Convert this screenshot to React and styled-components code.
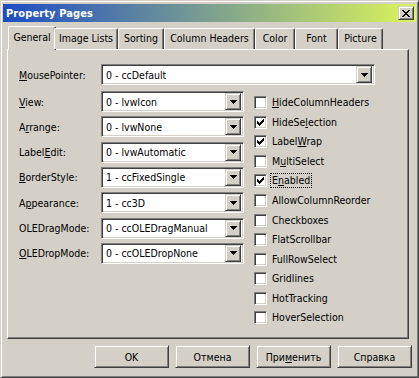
import React from 'react'
import styled, { createGlobalStyle } from 'styled-components'

const face = '#d4d0c8'
const shadow = '#808080'
const dark = '#404040'

const GlobalStyle = createGlobalStyle`
    html, body {
        margin: 0;
        padding: 0;
        background: ${face};
    }
    body {
        font-family: "DejaVu Sans Condensed", "DejaVu Sans", sans-serif;
        font-stretch: condensed;
        font-size: 10.5px;
        color: #000;
    }
`

const Window = styled.div`
    box-sizing: border-box;
    width: 419px;
    height: 378px;
    padding: 2px 1px 1px;
    background: ${face};
    border: 1px solid;
    border-color: ${face} ${dark} ${dark} ${face};
    box-shadow: inset 1px 1px #fff, inset -1px -1px ${shadow};
    display: flex;
    flex-direction: column;
`

const TitleBar = styled.div`
    height: 18px;
    margin: 1px 1px 0;
    display: flex;
    align-items: center;
    justify-content: space-between;
    padding: 0 2px 0 3px;
    background: linear-gradient(to right, #1c4cc6, #dcf45a);
    color: #fff;
    font-weight: bold;
    font-size: 11px;
    letter-spacing: 0.1px;
`

const CloseButton = styled.div`
    box-sizing: border-box;
    width: 16px;
    height: 14px;
    background: ${face};
    border: 1px solid;
    border-color: ${face} ${dark} ${dark} ${face};
    box-shadow: inset 1px 1px #fff, inset -1px -1px ${shadow};
    display: flex;
    align-items: center;
    justify-content: center;
`

const Body = styled.div`
    flex: 1;
    display: flex;
    flex-direction: column;
    padding: 4px 5px 0;
`

const TabStrip = styled.div`
    height: 23px;
    display: flex;
    align-items: flex-end;
    padding-left: 3px;
    position: relative;
    z-index: 1;
`

const Tab = styled.div`
    box-sizing: border-box;
    width: ${p => p.$w}px;
    height: ${p => (p.$active ? 24 : 21)}px;
    margin: ${p => (p.$active ? '0 -2px -1px' : '0')};
    padding-top: ${p => (p.$active ? 4 : 3)}px;
    text-align: center;
    background: ${face};
    border-top: 1px solid #fff;
    border-left: 1px solid #fff;
    border-right: 1px solid ${dark};
    border-top-left-radius: 2px;
    border-top-right-radius: 2px;
    box-shadow: inset -1px 0 ${shadow};
    white-space: nowrap;
`

const Panel = styled.div`
    box-sizing: border-box;
    width: 402px;
    height: 290px;
    border: 1px solid;
    border-color: #fff ${dark} ${dark} #fff;
    box-shadow: inset -1px -1px ${shadow};
    padding: 14px 0 0 11px;
    display: flex;
    flex-direction: column;
    gap: 6px;
`

const FieldRow = styled.div`
    display: flex;
    align-items: center;
    height: 21px;
`

const Label = styled.span`
    width: 82px;
    flex: none;
    white-space: nowrap;
`

const Key = styled.u`
    text-underline-offset: 1px;
`

const Combo = styled.div`
    box-sizing: border-box;
    width: ${p => p.$w}px;
    height: 21px;
    background: #fff;
    border: 1px solid;
    border-color: ${shadow} #fff #fff ${shadow};
    box-shadow: inset 1px 1px ${dark}, inset -1px -1px ${face};
    display: flex;
    align-items: center;
    justify-content: space-between;
    padding: 2px 2px 2px 4px;
    white-space: nowrap;
`

const DropButton = styled.div`
    box-sizing: border-box;
    width: 16px;
    height: 17px;
    background: ${face};
    border: 1px solid;
    border-color: ${face} ${dark} ${dark} ${face};
    box-shadow: inset 1px 1px #fff, inset -1px -1px ${shadow};
    display: flex;
    align-items: center;
    justify-content: center;
`

const Columns = styled.div`
    display: flex;
    gap: 10px;
`

const FieldList = styled.div`
    display: grid;
    grid-auto-rows: 21px;
    row-gap: 4.33px;
`

const CheckList = styled.div`
    display: grid;
    grid-auto-rows: 19.55px;
    padding-top: 2px;
`

const CheckRow = styled.div`
    display: flex;
    align-items: center;
    gap: 5px;
    white-space: nowrap;
`

const Box = styled.div`
    box-sizing: border-box;
    width: 13px;
    height: 13px;
    flex: none;
    background: #fff;
    border: 1px solid;
    border-color: ${shadow} #fff #fff ${shadow};
    box-shadow: inset 1px 1px ${dark}, inset -1px -1px ${face};
    display: flex;
    align-items: center;
    justify-content: center;
`

const CheckText = styled.span`
    padding: 0 1px;
    border: 1px ${p => (p.$focus ? 'dotted #000' : 'solid transparent')};
    margin-left: -2px;
    line-height: 13px;
`

const ButtonRow = styled.div`
    display: flex;
    justify-content: flex-end;
    gap: 6px;
    margin-top: 6px;
`

const PushButton = styled.div`
    box-sizing: border-box;
    width: 75px;
    height: 23px;
    border: 1px solid;
    border-color: ${face} ${dark} ${dark} ${face};
    box-shadow: inset 1px 1px #fff, inset -1px -1px ${shadow};
    display: flex;
    align-items: center;
    justify-content: center;
`

const Arrow = () => (
    <svg width="7" height="4" viewBox="0 0 7 4" shapeRendering="crispEdges">
        <path d="M0 0h7v1H0zM1 1h5v1H1zM2 2h3v1H2zM3 3h1v1H3z" fill="#000" />
    </svg>
)

const CheckMark = () => (
    <svg width="7" height="7" viewBox="0 0 7 7" shapeRendering="crispEdges">
        <path d="M6 0h1v3H6zM5 1h1v3H5zM4 2h1v3H4zM3 3h1v3H3zM2 4h1v3H2zM1 3h1v3H1zM0 2h1v3H0z" fill="#000" />
    </svg>
)

const CloseGlyph = () => (
    <svg width="8" height="7" viewBox="0 0 8 7" shapeRendering="crispEdges">
        <path d="M0 0h2v1H0zM6 0h2v1H6zM1 1h2v1H1zM5 1h2v1H5zM2 2h4v1H2zM3 3h2v1H3zM2 4h4v1H2zM1 5h2v1H1zM5 5h2v1H5zM0 6h2v1H0zM6 6h2v1H6z" fill="#000" />
    </svg>
)

const tabs = [
    { name: 'General', w: 48, active: true },
    { name: 'Image Lists', w: 64 },
    { name: 'Sorting', w: 46 },
    { name: 'Column Headers', w: 91 },
    { name: 'Color', w: 40 },
    { name: 'Font', w: 43 },
    { name: 'Picture', w: 45 },
]

const fields = [
    { pre: '', key: 'V', post: 'iew:', value: '0 - lvwIcon' },
    { pre: 'A', key: 'r', post: 'range:', value: '0 - lvwNone' },
    { pre: 'Label', key: 'E', post: 'dit:', value: '0 - lvwAutomatic' },
    { pre: '', key: 'B', post: 'orderStyle:', value: '1 - ccFixedSingle' },
    { pre: 'A', key: 'p', post: 'pearance:', value: '1 - cc3D' },
    { pre: 'OLEDragMode:', key: '', post: '', value: '0 - ccOLEDragManual' },
    { pre: '', key: 'O', post: 'LEDropMode:', value: '0 - ccOLEDropNone' },
]

const checks = [
    { pre: '', key: 'H', post: 'ideColumnHeaders' },
    { pre: 'HideSe', key: 'l', post: 'ection', on: true },
    { pre: 'Label', key: 'W', post: 'rap', on: true },
    { pre: 'M', key: 'u', post: 'ltiSelect' },
    { pre: 'E', key: 'n', post: 'abled', on: true, focus: true },
    { pre: 'AllowColumnReorder' },
    { pre: 'Checkboxes' },
    { pre: 'FlatScrollbar' },
    { pre: 'FullRowSelect' },
    { pre: 'Gridlines' },
    { pre: 'HotTracking' },
    { pre: 'HoverSelection' },
]

const Text = ({ pre, k, post }) => (
    <>
        {pre}
        {k && <Key>{k}</Key>}
        {post}
    </>
)

const App = () => {
    return (
        <>
            <GlobalStyle />
            <Window>
                <TitleBar>
                    <span>Property Pages</span>
                    <CloseButton><CloseGlyph /></CloseButton>
                </TitleBar>
                <Body>
                    <TabStrip>
                        {tabs.map(t => (
                            <Tab key={t.name} $w={t.w} $active={t.active}>{t.name}</Tab>
                        ))}
                    </TabStrip>
                    <Panel>
                        <FieldRow>
                            <Label><Key>M</Key>ousePointer:</Label>
                            <Combo $w={274}>
                                <span>0 - ccDefault</span>
                                <DropButton><Arrow /></DropButton>
                            </Combo>
                        </FieldRow>
                        <Columns>
                            <FieldList>
                                {fields.map(f => (
                                    <FieldRow key={f.value}>
                                        <Label><Text pre={f.pre} k={f.key} post={f.post} /></Label>
                                        <Combo $w={143}>
                                            <span>{f.value}</span>
                                            <DropButton><Arrow /></DropButton>
                                        </Combo>
                                    </FieldRow>
                                ))}
                            </FieldList>
                            <CheckList>
                                {checks.map(c => (
                                    <CheckRow key={c.pre + (c.post || '')}>
                                        <Box>{c.on && <CheckMark />}</Box>
                                        <CheckText $focus={c.focus}>
                                            <Text pre={c.pre} k={c.key} post={c.post} />
                                        </CheckText>
                                    </CheckRow>
                                ))}
                            </CheckList>
                        </Columns>
                    </Panel>
                    <ButtonRow>
                        <PushButton>OK</PushButton>
                        <PushButton>Отмена</PushButton>
                        <PushButton>При<Key>м</Key>енить</PushButton>
                        <PushButton>Справка</PushButton>
                    </ButtonRow>
                </Body>
            </Window>
        </>
    )
}

export default App
